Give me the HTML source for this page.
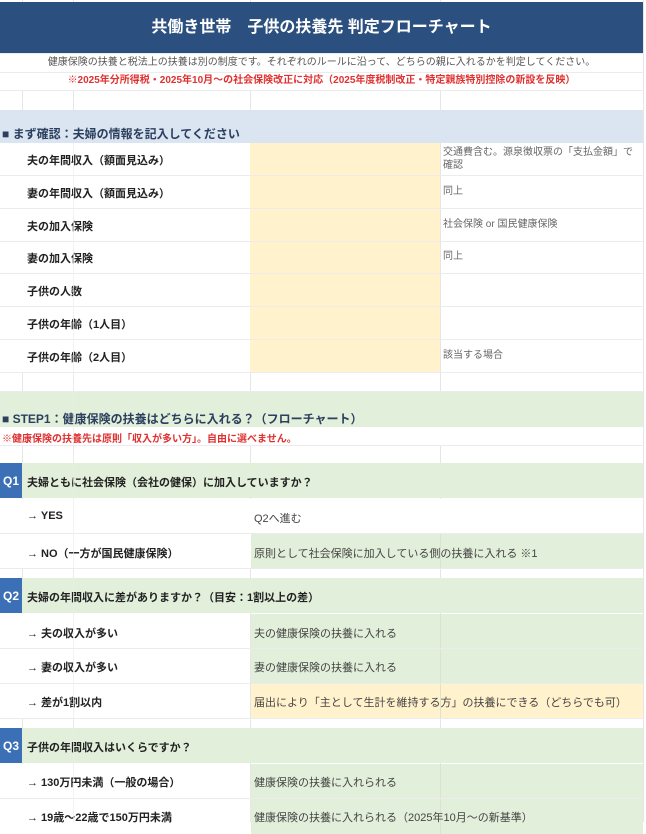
<!DOCTYPE html>
<html><head><meta charset="utf-8"><style>
*{margin:0;padding:0;box-sizing:border-box}
body{width:646px;height:822px;overflow:hidden;background:#fff;position:relative;font-family:"Liberation Sans","Noto Sans CJK JP",sans-serif;font-size:11px;color:#333}
.a{position:absolute}
.vl{position:absolute;top:0;width:1px;height:822px;background:#e6e6e6}
.hl{position:absolute;left:0;width:643px;height:1px;background:#ececec}
.lb{position:absolute;left:27px;font-weight:bold;color:#222;font-size:11px}
.nt{position:absolute;left:443px;color:#666;font-size:10px;line-height:13px}
.qb{position:absolute;left:0;width:22px;background:#3b6fb6;color:#fff;font-weight:bold;font-size:12px;display:flex;align-items:center;justify-content:center}
.g{background:#e2efda}
.y{background:#fff2cc}
.rt{position:absolute;left:254px;color:#444;font-size:11px}
</style></head><body>
<div class="vl" style="left:22px"></div>
<div class="vl" style="left:73px"></div>
<div class="vl" style="left:250px"></div>
<div class="vl" style="left:440px"></div>
<div class="vl" style="left:643px"></div>

<div class="a" style="left:0;top:2px;width:643px;height:51px;background:#2b4f7e;color:#fff;font-weight:bold;font-size:16px;text-align:center;line-height:51px">共働き世帯　子供の扶養先 判定フローチャート</div>
<div class="a" style="left:0;top:53px;width:643px;height:19px;background:#fff;text-align:center;font-size:10px;color:#555;line-height:19px">健康保険の扶養と税法上の扶養は別の制度です。それぞれのルールに沿って、どちらの親に入れるかを判定してください。</div>
<div class="a" style="left:0;top:72px;width:643px;height:18px;background:#fff;text-align:center;font-size:10px;color:#e03030;font-weight:bold;line-height:18px">※2025年分所得税・2025年10月～の社会保険改正に対応（2025年度税制改正・特定親族特別控除の新設を反映）</div>
<div class="hl" style="top:53px"></div><div class="hl" style="top:72px"></div><div class="hl" style="top:90px"></div>

<div class="a" style="left:0;top:110px;width:643px;height:33px;background:#dae5f1"></div>
<div class="a" style="left:2px;top:125px;font-weight:bold;font-size:12px;color:#2b3f5e">■ まず確認：夫婦の情報を記入してください</div>

<div class="a" style="left:22px;top:143px;width:228px;height:230px;background:#fff"></div>
<div class="a y" style="left:250px;top:143px;width:190px;height:229px"></div>
<div class="a" style="left:441px;top:143px;width:202px;height:230px;background:#fff"></div>
<div class="hl" style="top:175px"></div><div class="hl" style="top:208px"></div><div class="hl" style="top:241px"></div><div class="hl" style="top:273px"></div><div class="hl" style="top:306px"></div><div class="hl" style="top:339px"></div><div class="hl" style="top:372px"></div>
<div class="lb" style="top:152px">夫の年間収入（額面見込み）</div>
<div class="nt" style="top:146px">交通費含む。源泉徴収票の「支払金額」で<br>確認</div>
<div class="lb" style="top:185px">妻の年間収入（額面見込み）</div><div class="nt" style="top:185px">同上</div>
<div class="lb" style="top:218px">夫の加入保険</div><div class="nt" style="top:218px">社会保険 or 国民健康保険</div>
<div class="lb" style="top:250px">妻の加入保険</div><div class="nt" style="top:250px">同上</div>
<div class="lb" style="top:283px">子供の人数</div>
<div class="lb" style="top:316px">子供の年齢（1人目）</div>
<div class="lb" style="top:349px">子供の年齢（2人目）</div><div class="nt" style="top:349px">該当する場合</div>
<div class="hl" style="top:391px"></div>

<div class="a g" style="left:0;top:392px;width:643px;height:35px"></div>
<div class="a" style="left:2px;top:410px;font-weight:bold;font-size:12px;color:#2b3f5e">■ STEP1：健康保険の扶養はどちらに入れる？（フローチャート）</div>
<div class="a" style="left:0;top:427px;width:643px;height:18px;background:#fff"></div>
<div class="a" style="left:2px;top:430px;font-weight:bold;font-size:10px;color:#e03030">※健康保険の扶養先は原則「収入が多い方」。自由に選べません。</div>
<div class="hl" style="top:445px"></div><div class="hl" style="top:463px"></div>

<div class="a g" style="left:22px;top:463px;width:621px;height:35px"></div>
<div class="qb" style="top:463px;height:35px">Q1</div>
<div class="lb" style="top:474px">夫婦ともに社会保険（会社の健保）に加入していますか？</div>
<div class="a" style="left:22px;top:499px;width:621px;height:69px;background:#fff"></div>
<div class="a g" style="left:251px;top:534px;width:392px;height:34px"></div>
<div class="vl" style="left:440px;top:534px;height:34px;background:#d8e4cf"></div>
<div class="hl" style="top:533px"></div><div class="hl" style="top:568px"></div>
<div class="lb" style="top:510px">→ YES</div><div class="rt" style="top:510px">Q2へ進む</div>
<div class="lb" style="top:545px">→ NO（一方が国民健康保険）</div><div class="rt" style="top:545px">原則として社会保険に加入している側の扶養に入れる ※1</div>

<div class="hl" style="top:578px"></div>
<div class="a g" style="left:22px;top:578px;width:621px;height:35px"></div>
<div class="qb" style="top:578px;height:35px">Q2</div>
<div class="lb" style="top:589px">夫婦の年間収入に差がありますか？（目安：1割以上の差）</div>
<div class="a" style="left:22px;top:614px;width:228px;height:104px;background:#fff"></div>
<div class="a g" style="left:251px;top:614px;width:392px;height:69px"></div>
<div class="a y" style="left:251px;top:684px;width:392px;height:34px"></div>
<div class="vl" style="left:440px;top:614px;height:104px;background:#d8e4cf"></div>
<div class="hl" style="top:648px"></div><div class="hl" style="top:683px"></div><div class="hl" style="top:718px"></div>
<div class="lb" style="top:625px">→ 夫の収入が多い</div><div class="rt" style="top:625px">夫の健康保険の扶養に入れる</div>
<div class="lb" style="top:659px">→ 妻の収入が多い</div><div class="rt" style="top:659px">妻の健康保険の扶養に入れる</div>
<div class="lb" style="top:694px">→ 差が1割以内</div><div class="rt" style="top:694px">届出により「主として生計を維持する方」の扶養にできる（どちらでも可）</div>

<div class="hl" style="top:728px"></div>
<div class="a g" style="left:22px;top:728px;width:621px;height:35px"></div>
<div class="qb" style="top:728px;height:35px">Q3</div>
<div class="lb" style="top:739px">子供の年間収入はいくらですか？</div>
<div class="a" style="left:22px;top:764px;width:228px;height:70px;background:#fff"></div>
<div class="a g" style="left:251px;top:764px;width:392px;height:70px"></div>
<div class="vl" style="left:440px;top:764px;height:70px;background:#d8e4cf"></div>
<div class="hl" style="top:798px"></div>
<div class="lb" style="top:774px">→ 130万円未満（一般の場合）</div><div class="rt" style="top:774px">健康保険の扶養に入れられる</div>
<div class="lb" style="top:809px">→ 19歳～22歳で150万円未満</div><div class="rt" style="top:809px">健康保険の扶養に入れられる（2025年10月～の新基準）</div>
<div class="vl" style="left:73px;top:143px;height:680px;background:#ececec;opacity:.7"></div>
</body></html>
